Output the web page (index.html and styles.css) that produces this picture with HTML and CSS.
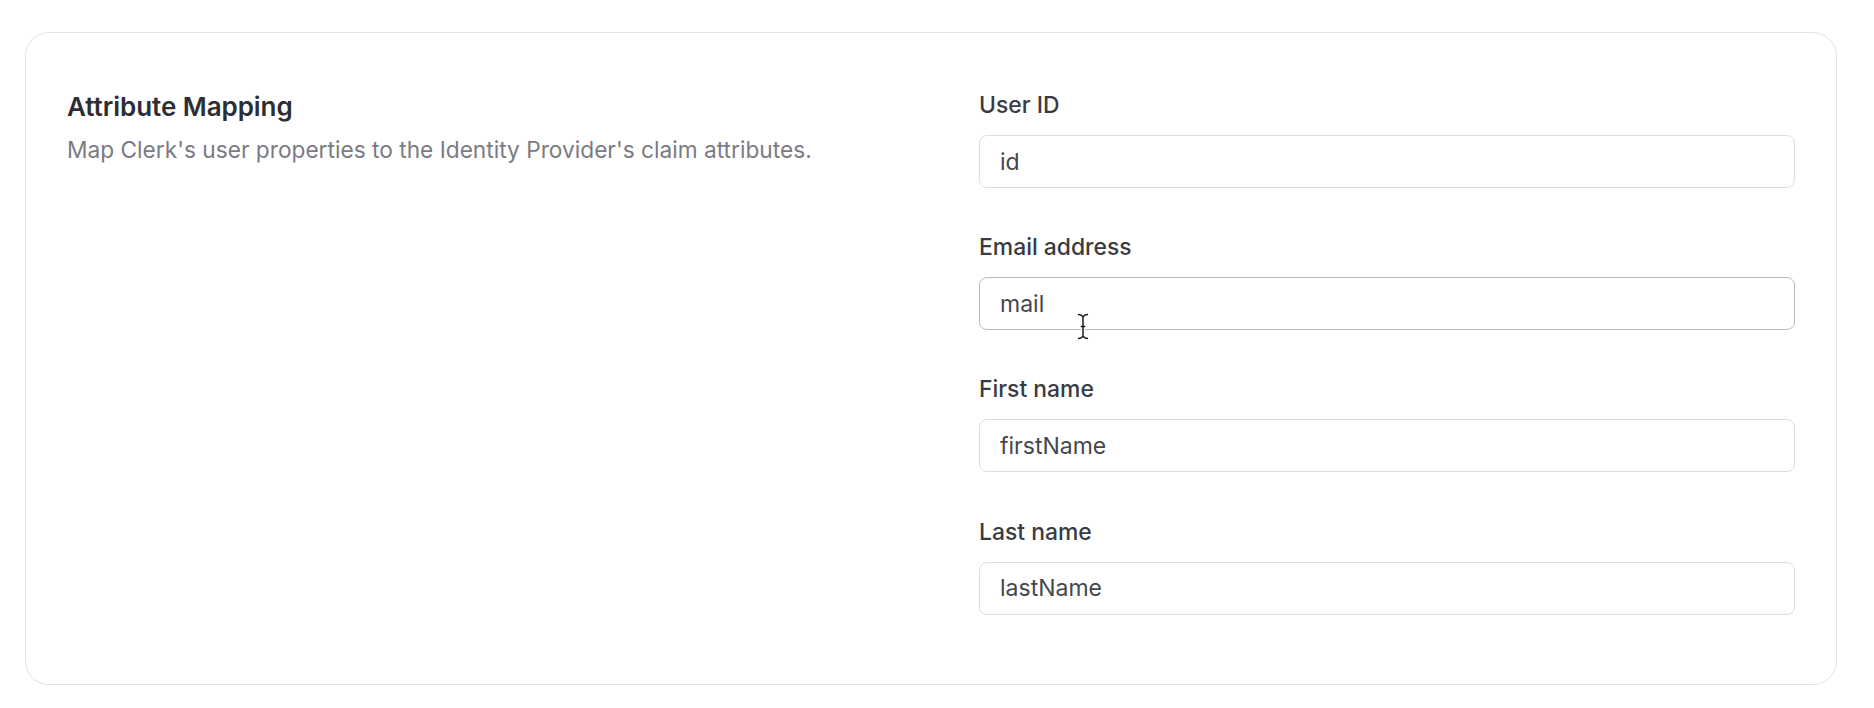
FILE: index.html
```html
<!DOCTYPE html>
<html lang="en">
<head>
<meta charset="utf-8">
<title>Attribute Mapping</title>
<link rel="stylesheet" href="styles.css">
</head>
<body>
<section class="card">
  <div class="intro">
    <h2 class="title">Attribute Mapping</h2>
    <p class="subtitle">Map Clerk's user properties to the Identity Provider's claim attributes.</p>
  </div>
  <div class="fields">
    <div class="field">
      <label class="label">User ID</label>
      <div class="input">id</div>
    </div>
    <div class="field">
      <label class="label">Email address</label>
      <div class="input input-hover">mail</div>
      <svg class="cursor" width="12" height="27" viewBox="0 0 12 27" aria-hidden="true">
        <path d="M1.5 1.5 C4 1.5 5.2 2.4 6 3.8 C6.8 2.4 8 1.5 10.5 1.5 M6 3.8 V23.2 M4 13.5 H8 M1.5 25.5 C4 25.5 5.2 24.6 6 23.2 C6.8 24.6 8 25.5 10.5 25.5" fill="none" stroke="#ffffff" stroke-width="3" stroke-linecap="round"/>
        <path d="M1.5 1.5 C4 1.5 5.2 2.4 6 3.8 C6.8 2.4 8 1.5 10.5 1.5 M6 3.8 V23.2 M4.3 13.5 H7.7 M1.5 25.5 C4 25.5 5.2 24.6 6 23.2 C6.8 24.6 8 25.5 10.5 25.5" fill="none" stroke="#111111" stroke-width="1.4" stroke-linecap="round"/>
      </svg>
    </div>
    <div class="field">
      <label class="label">First name</label>
      <div class="input">firstName</div>
    </div>
    <div class="field">
      <label class="label">Last name</label>
      <div class="input">lastName</div>
    </div>
  </div>
</section>
</body>
</html>
```

FILE: styles.css
```css
* { box-sizing: border-box; }
html, body { background: #ffffff; }
body {
  margin: 0;
  padding: 32px 37px 23px 25px;
  font-family: Inter, "Noto Sans", "Liberation Sans", sans-serif;
  -webkit-font-smoothing: antialiased;
}
.card {
  border: 1.5px solid #e2e2e5;
  border-radius: 24px;
  height: 653px;
  padding: 59px 41px 0 41px;
  display: grid;
  grid-template-columns: 1fr 816px;
  column-gap: 96px;
  align-items: start;
}
.title {
  margin: 0;
  font-size: 26px;
  line-height: 30px;
  font-weight: 600;
  color: #2d2e35;
  letter-spacing: -0.05px;
}
.subtitle {
  margin: 13px 0 0 0;
  font-size: 22.7px;
  line-height: 30px;
  font-weight: 400;
  color: #7a7b83;
}
.fields {
  display: flex;
  flex-direction: column;
  gap: 46.2px;
}
.field {
  position: relative;
  display: flex;
  flex-direction: column;
  gap: 17px;
}
.label {
  font-size: 22.9px;
  line-height: 26px;
  font-weight: 500;
  color: #3a3b42;
}
.input {
  height: 53px;
  border: 1.5px solid #dededf;
  border-radius: 8px;
  padding: 0 20px;
  display: flex;
  align-items: center;
  font-size: 23px;
  color: #45464d;
}
.input-hover {
  border-color: #bcbcc1;
}
.cursor {
  position: absolute;
  left: 98px;
  top: 79px;
}
```
